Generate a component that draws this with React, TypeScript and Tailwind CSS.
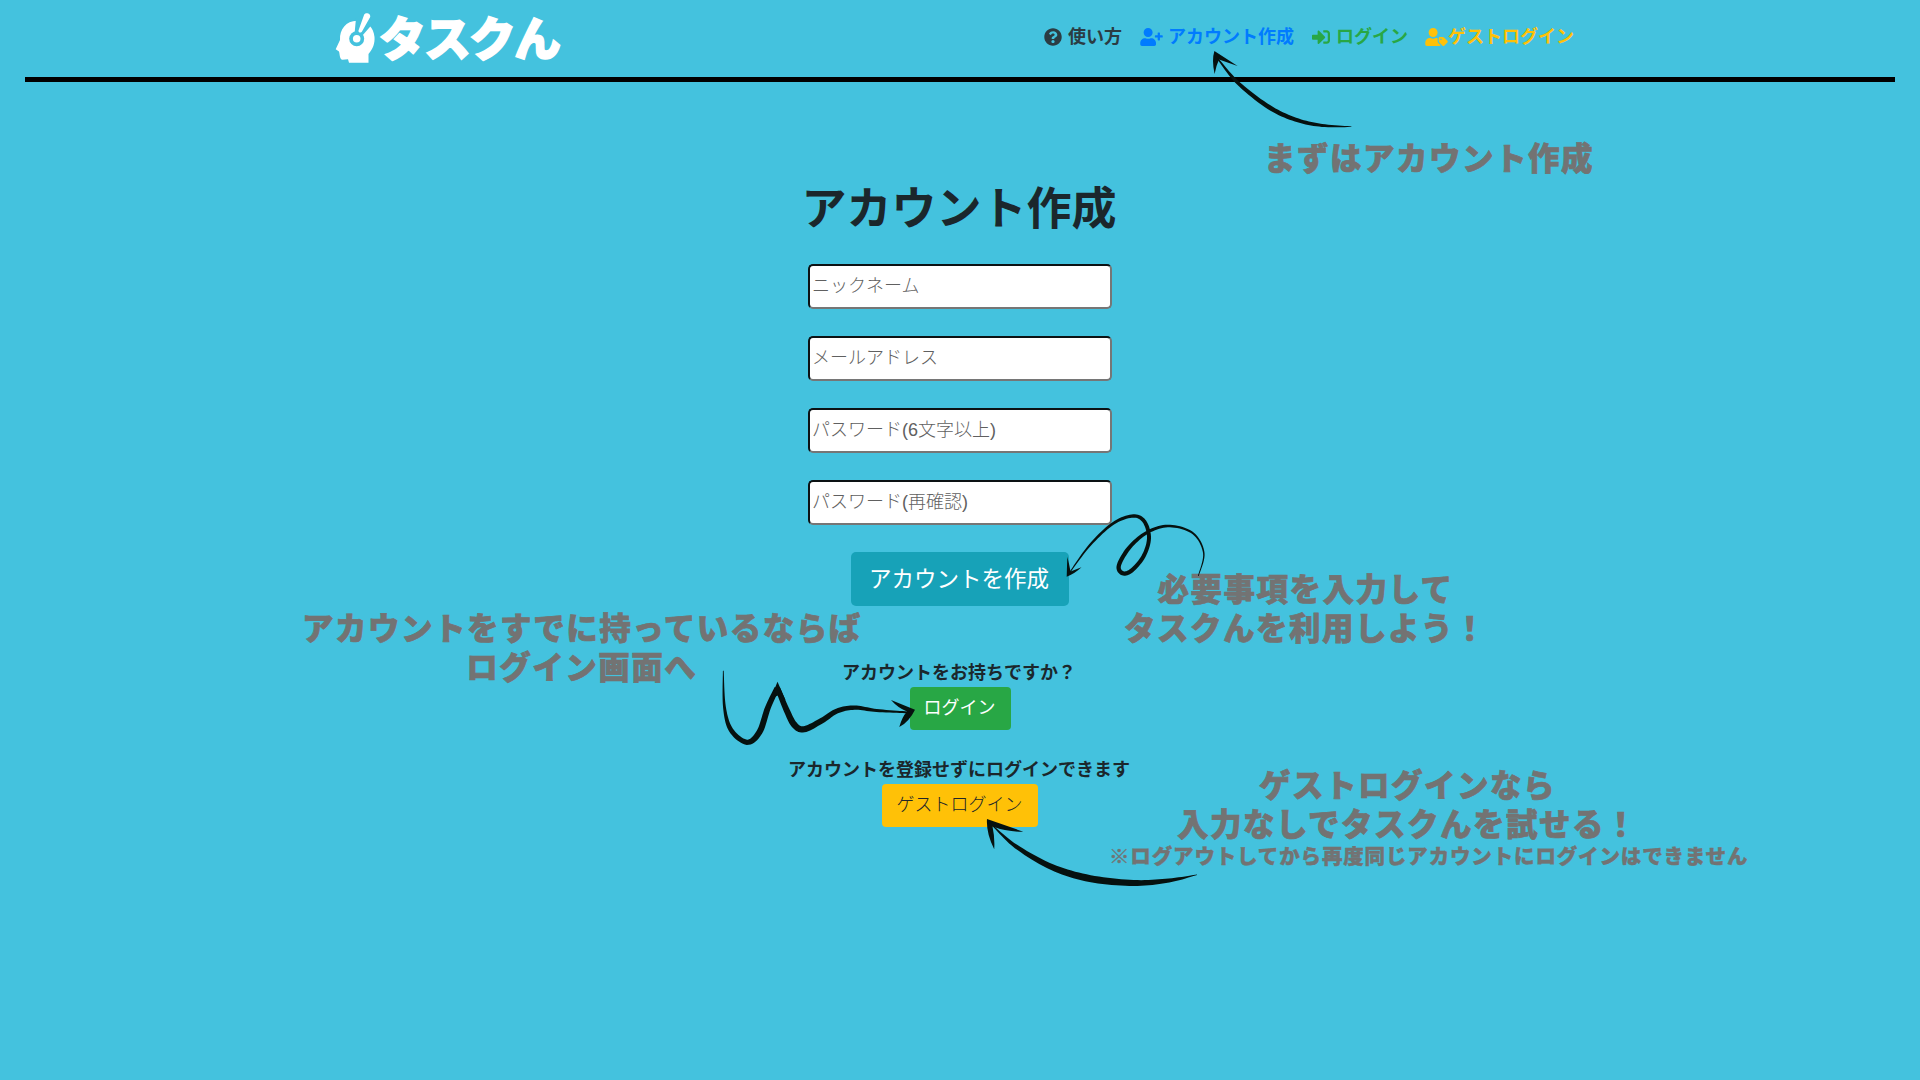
import React from "react";
import { FaQuestionCircle, FaUserPlus, FaSignInAlt, FaUserTag } from "react-icons/fa";

type Pt = [number, number, number];

// Outline of a brush stroke through [x, y, width] points
function brush(pts: Pt[]): string {
  const s: Pt[] = [];
  const n = pts.length;
  for (let i = 0; i < n - 1; i++) {
    const p0 = pts[Math.max(0, i - 1)], p1 = pts[i], p2 = pts[i + 1], p3 = pts[Math.min(n - 1, i + 2)];
    for (let k = 0; k < 10; k++) {
      const t = k / 10;
      const f = (j: number) =>
        0.5 * (2 * p1[j] + (p2[j] - p0[j]) * t + (2 * p0[j] - 5 * p1[j] + 4 * p2[j] - p3[j]) * t * t + (3 * p1[j] - p0[j] - 3 * p2[j] + p3[j]) * t * t * t);
      s.push([f(0), f(1), f(2)]);
    }
  }
  s.push(pts[n - 1]);
  const l: string[] = [], r: string[] = [];
  s.forEach((p, i) => {
    const a = s[Math.max(0, i - 1)], b = s[Math.min(s.length - 1, i + 1)];
    const dx = b[0] - a[0], dy = b[1] - a[1], d = Math.hypot(dx, dy) || 1;
    const ox = (-dy / d) * p[2] / 2, oy = (dx / d) * p[2] / 2;
    l.push(`${(p[0] + ox).toFixed(2)},${(p[1] + oy).toFixed(2)}`);
    r.unshift(`${(p[0] - ox).toFixed(2)},${(p[1] - oy).toFixed(2)}`);
  });
  return "M" + l.concat(r).join("L") + "Z";
}

const strokes: Pt[][] = [
  [[1218, 59, 1.5], [1238, 83, 3.5], [1268.8, 107, 4.5], [1295.5, 119.6, 4], [1322, 125.4, 3], [1351.4, 126.7, 0.6]],
  [[1198.3, 576, 0.8], [1203.8, 553.3, 1.5], [1193.3, 533.5, 2], [1170, 526, 2.5], [1148.3, 531.7, 3.2], [1130, 546.7, 4], [1119, 565, 4.3], [1122, 573, 4.3], [1131, 571, 4.2], [1143.3, 556.7, 4], [1149, 538.3, 4], [1144.5, 521.7, 3.8], [1133.3, 516, 3.4], [1113.3, 523.3, 2.8], [1090, 545, 2.2], [1070, 572, 1]],
  [[723.3, 670.7, 0.8], [724.4, 706.7, 2.8], [731, 730, 4.6], [747, 742.3, 5.2], [759.5, 732, 6], [767.8, 708, 5.8], [777, 688, 5]],
  [[777.5, 688, 5], [787, 711, 6], [794.5, 725, 6.4], [804, 729.3, 6.2], [822, 720.5, 5.6], [837, 711, 5], [854.5, 707.6, 4.4], [876.7, 710.5, 3], [907, 712.3, 1.8]],
  [[993, 826, 1], [1016, 846.5, 4], [1051.8, 867, 6], [1090, 878.6, 7], [1133.5, 883, 6], [1169, 880.5, 4], [1197, 874.7, 0.5]],
];

function Arrows() {
  return (
    <svg className="pointer-events-none absolute left-0 top-0" width="1920" height="1080" viewBox="0 0 1920 1080" fill="#06110f">
      {strokes.map((p, i) => (
        <path key={i} d={brush(p)} />
      ))}
      <path d="M1214.4 51L1237.6 66L1219 59.5Q1216 66 1214.6 74Q1211.5 60 1214.4 51Z" />
      <path d="M1066.7 576.7L1067.3 556.7Q1069 563 1070.5 571.5L1081.5 567.3Q1075 573.5 1066.7 576.7Z" />
      <path d="M777.5 681.7L770 700L777.5 695.5L785.5 700Z" />
      <path d="M915 709.7L891 700Q898 708 907 711.5Q902 717 899.3 727Q909 722 915 709.7Z" />
      <path d="M987 819L1023.3 831.7Q1007 832 992.5 826.5Q995 838 994.2 849.3Q986 833 987 819Z" />
    </svg>
  );
}

function Logo() {
  return (
    <div className="flex h-[52px] items-center">
      <svg width="42" height="52" viewBox="334 12 42 52" className="shrink-0">
        <path fill="#fff" d="M357 20.700C346 21 339.500 29 340 40L335.700 49.300L339 51.500C340 55 339.500 59.300 342.500 59.800L348 59.300L349 62.700H368.500V54C373 49 375 43 374.500 37C374 32 372 28 369.500 25.500Z" />
        <path fill="#44c2de" d="M356 18L354.500 34L362 36L372.500 24L368 12Z" />
        <circle cx="356.700" cy="38.700" r="7.500" fill="#44c2de" />
        <circle cx="356.700" cy="38.700" r="3.800" fill="#fff" />
        <path fill="#fff" d="M364.200 14.500C366 12 371 13.500 370.200 17L362 31.500C361 33.500 358 32.500 358.500 30.500Z" />
      </svg>
      <span className="ml-[3px] mt-[2px] text-[47px] font-black leading-none tracking-[-2px] text-white [-webkit-text-stroke:1.5px_white]">タスクん</span>
    </div>
  );
}

const note = "absolute whitespace-nowrap text-center text-[31.5px] font-black leading-[39px] tracking-[1.5px] text-[#737373] [-webkit-text-stroke:0.7px_#737373]";
const field = "block h-[45px] w-[304px] rounded-[5px] border-2 border-t-[#0c1214] border-l-[#0c1214] border-r-[#767676] border-b-[#767676] bg-white px-[2px] text-[18px] font-light text-black outline-none placeholder:text-[#606060] placeholder:opacity-100";

export default function App() {
  return (
    <div className="relative h-[1080px] w-[1920px] overflow-hidden bg-[#44c2de] text-[#1b272c] font-['Liberation_Sans','Noto_Sans_CJK_JP',sans-serif]" lang="ja">
      <header className="mx-[25px] flex h-[82px] items-start border-b-[5px] border-black pl-[309px] pr-[321px] pt-[12px]">
        <Logo />
        <nav className="ml-auto flex h-[50px] items-center text-[18px] font-bold leading-[27px]">
          <a className="flex items-center text-[#2b3c43]"><FaQuestionCircle className="mr-[6px]" />使い方</a>
          <a className="ml-[18px] flex items-center text-[#007bff]"><FaUserPlus className="mr-[5px] h-[18px] w-[23px]" />アカウント作成</a>
          <a className="ml-[18px] flex items-center text-[#28a745]"><FaSignInAlt className="mr-[6px]" />ログイン</a>
          <a className="ml-[17px] flex items-center text-[#ffc107]"><FaUserTag className="h-[18px] w-[23px]" />ゲストログイン</a>
        </nav>
      </header>
      <main className="flex flex-col items-center">
        <h1 className="mt-[101px] pr-[2px] text-[45px] font-bold leading-[54px]">アカウント作成</h1>
        <form className="mt-[27px] flex flex-col items-center gap-[27px]">
          <input className={field} placeholder="ニックネーム" />
          <input className={field} placeholder="メールアドレス" />
          <input className={field} placeholder="パスワード(6文字以上)" />
          <input className={field} placeholder="パスワード(再確認)" />
          <button type="button" className="h-[54px] w-[218px] rounded-[5px] bg-[#17a2b8] pr-[2px] pt-[1px] text-[22.5px] text-white">アカウントを作成</button>
        </form>
        <p className="mt-[54px] pr-[2px] text-[18px] font-bold leading-[27px]">アカウントをお持ちですか？</p>
        <button type="button" className="h-[43px] w-[101px] rounded-[4px] bg-[#28a745] pr-[1px] text-[18px] text-white">ログイン</button>
        <p className="mt-[27px] pr-[2px] text-[18px] font-bold leading-[27px]">アカウントを登録せずにログインできます</p>
        <button type="button" className="h-[43px] w-[156px] rounded-[4px] bg-[#ffc107] pr-[1px] text-[18px] font-light text-[#212529]">ゲストログイン</button>
      </main>
      <p className={`${note} left-[1264px] top-[140px]`}>まずはアカウント作成</p>
      <p className={`${note} left-[1124px] top-[571px]`}>必要事項を入力して<br />タスクんを利用しよう！</p>
      <p className={`${note} left-[302px] top-[610px]`}>アカウントをすでに持っているならば<br />ログイン画面へ</p>
      <div className="absolute left-[1109px] top-[767px] flex flex-col whitespace-nowrap text-center font-black text-[#737373] [-webkit-text-stroke:0.7px_#737373]">
        <p className="w-[597px] text-[31.5px] leading-[39px] tracking-[1.5px]">ゲストログインなら<br />入力なしでタスクんを試せる！</p>
        <p className="text-left text-[20.5px] leading-[24px] tracking-[0.85px] [-webkit-text-stroke:0.4px_#737373]">※ログアウトしてから再度同じアカウントにログインはできません</p>
      </div>
      <Arrows />
    </div>
  );
}
